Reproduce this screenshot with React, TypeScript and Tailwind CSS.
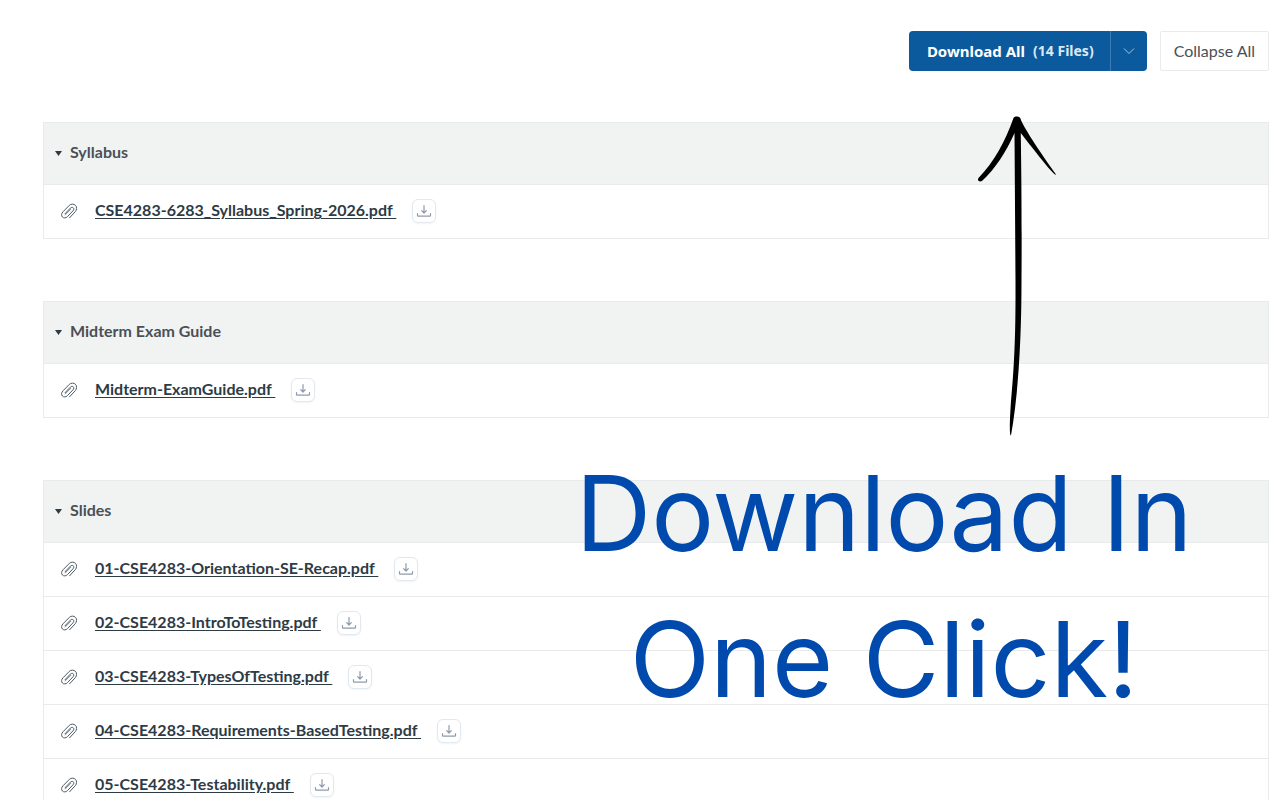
import { useState } from 'react';

interface Module {
  title: string;
  files: string[];
}

const modules: Module[] = [
  { title: 'Syllabus', files: ['CSE4283-6283_Syllabus_Spring-2026.pdf'] },
  { title: 'Midterm Exam Guide', files: ['Midterm-ExamGuide.pdf'] },
  {
    title: 'Slides',
    files: [
      '01-CSE4283-Orientation-SE-Recap.pdf',
      '02-CSE4283-IntroToTesting.pdf',
      '03-CSE4283-TypesOfTesting.pdf',
      '04-CSE4283-Requirements-BasedTesting.pdf',
      '05-CSE4283-Testability.pdf',
    ],
  },
];

function ClipIcon() {
  return (
    <svg
      viewBox="0 0 16 16"
      className="w-4 h-4 shrink-0"
      fill="none"
      stroke="#4b5a66"
      strokeLinecap="round"
      aria-hidden="true"
    >
      <path d="M8.6 14.8 14.3 8.6C16 6.700 16 4 14.500 2.400 12.900 .700 10 .700 8.300 2.400L2 8.800C.300 10.500 .200 12.700 1.400 14 2.700 15.300 4.900 15.200 6.500 13.600L12 7.800C13 6.700 13 5.500 12.300 4.800 11.600 4.100 10.300 4.200 9.400 5.100L4 10.800" />
      <path d="M4.200 12 9.800 6.300" strokeWidth="0.700" />
    </svg>
  );
}

function TrayIcon() {
  return (
    <svg
      viewBox="0 0 16 16"
      className="w-4 h-4"
      fill="none"
      stroke="#8e9aab"
      strokeWidth="1.2"
      strokeLinecap="round"
      strokeLinejoin="round"
      aria-hidden="true"
    >
      <path d="M8 2.500v7.500M5.700 7.700 8 10l2.300-2.300" />
      <path d="M1.500 10.500v2q0 .700.700.700h11.600q.700 0 .700-.700v-2" />
    </svg>
  );
}

function FileRow({ name }: { name: string }) {
  return (
    <li className="flex items-center h-[54px] pl-[17px] pb-[2px] border-b border-[#e8eaec] last:border-b-0">
      <ClipIcon />
      <a
        href="#"
        className="ml-[18px] pb-[2px] text-base leading-5 font-bold text-[#2d3b45] underline underline-offset-2 whitespace-pre"
      >
        {name + ' '}
      </a>
      <button
        type="button"
        aria-label={`Download ${name}`}
        className="ml-4 w-6 h-6 flex items-center justify-center bg-white border border-[#e2e8f0] rounded-md shadow-xs"
      >
        <TrayIcon />
      </button>
    </li>
  );
}

function ModuleCard({ title, files, open }: Module & { open: boolean }) {
  return (
    <section className="border border-[#e8eaec]">
      <h2 className="flex items-center h-[62px] pl-[11px] gap-2 bg-[#f1f3f3] border-b border-[#e8eaec] text-base font-bold text-[#4a5056]">
        <svg viewBox="0 0 7 5" className="w-[7px] h-[5px]" aria-hidden="true">
          <path d="M0 0h7L3.500 5z" fill="#2d3b45" />
        </svg>
        <span className="pb-1">{title}</span>
      </h2>
      {open && (
        <ul className="-mb-px">
          {files.map((name) => (
            <FileRow key={name} name={name} />
          ))}
        </ul>
      )}
    </section>
  );
}

function Callout() {
  return (
    <div className="absolute top-[116px] left-[564px] w-[640px] pointer-events-none">
      <svg
        viewBox="0 0 80 320"
        className="w-20 h-80 ml-[412px]"
        aria-hidden="true"
      >
        <path d="M37.500 2C39 0 43 0 44.500 2.500 46 8 57 26 80 58.500 79 60 71 51 44.800 17 45.200 50 46 90 45.500 165 45.500 215 43 275 35 319.500 33 320 34 300 35 285 40 235 39.500 190 39.500 165L38.500 17C30 36 20 52 6 65 3 66.500 1 64 2.500 62 18 46 29 26 37.500 2Z" />
      </svg>
      <p className="mt-1 text-center text-[105px] leading-[146px] font-[Inter,sans-serif] text-[#004aad]">
        Download In
        <br />
        One Click!
      </p>
    </div>
  );
}

export default function App() {
  const [open, setOpen] = useState(true);

  return (
    <main className="relative h-screen overflow-hidden bg-white pl-[43px] pr-[11px] pt-[31px] font-[Lato,sans-serif]">
      <div className="flex justify-end gap-[13px]">
        <div className="flex h-10 rounded bg-[#0b5a9d] font-['Noto_Sans',sans-serif] text-white">
          <button type="button" className="flex items-center gap-2 pl-[18px] pr-4 text-[15px] font-bold">
            Download All
            <span className="text-sm text-[#dce8f3]">(14 Files)</span>
          </button>
          <button
            type="button"
            aria-label="Download options"
            className="w-[37px] flex items-center justify-center border-l border-[#3d7bb1]"
          >
            <svg viewBox="0 0 12 8" className="w-3 h-2" fill="none" stroke="#a9c8e2" aria-hidden="true">
              <path d="M1 1.500 6 6.500 11 1.500" />
            </svg>
          </button>
        </div>
        <button
          type="button"
          onClick={() => setOpen(!open)}
          className="h-10 px-[13px] border border-[#e8eaec] rounded-xs text-base text-[#4a5056]"
        >
          {open ? 'Collapse All' : 'Expand All'}
        </button>
      </div>

      <div className="mt-[51px] flex flex-col gap-[62px]">
        {modules.map((m) => (
          <ModuleCard key={m.title} {...m} open={open} />
        ))}
      </div>

      <Callout />
    </main>
  );
}
